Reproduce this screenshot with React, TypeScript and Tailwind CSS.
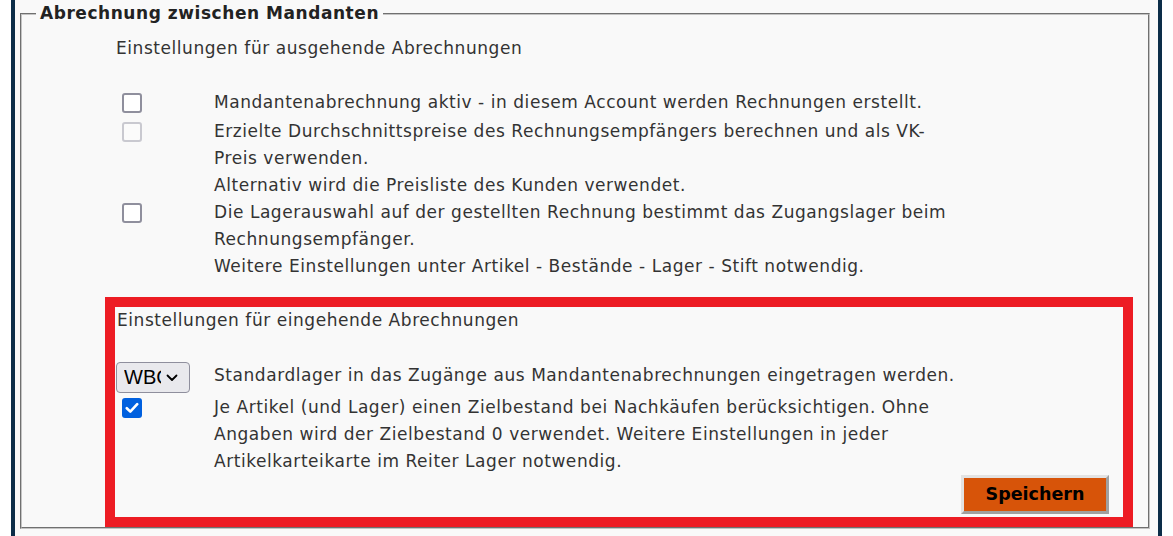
function Checkbox({ checked = false, disabled = false }: { checked?: boolean; disabled?: boolean }) {
  if (checked) {
    return (
      <span className="ml-[6px] mt-[4px] flex h-[20px] w-[20px] items-center justify-center rounded-[3px] bg-[#0060df]">
        <svg width="14" height="12" viewBox="0 0 14 12" fill="none">
          <path d="M1.8 6.2 L5.3 9.6 L12.2 2.2" stroke="white" strokeWidth="2.6" strokeLinecap="round" strokeLinejoin="round" />
        </svg>
      </span>
    );
  }
  return (
    <span
      className={
        disabled
          ? "ml-[6px] mt-[4px] block h-[20px] w-[20px] rounded-[3px] border-2 border-[#c9c9d0] bg-[#fbfbfb]"
          : "ml-[6px] mt-[4px] block h-[20px] w-[20px] rounded-[3px] border-2 border-[#8f8f9d] bg-white"
      }
    />
  );
}

export default function App() {
  return (
    <div className="h-[536px] w-full overflow-hidden bg-white px-[11px] font-['DejaVu_Sans',sans-serif] text-[17px] leading-[27px] tracking-[0.55px] text-[#333]">
      <div className="h-full border-x-4 border-[#0c2d48] bg-[#f9f9f9] pl-[5px] pr-[8px]">
        <fieldset className="border-2 border-[#c4c4c4] px-[14px] [border-style:groove]">
          <legend className="px-[4px] font-bold text-[#222]">Abrechnung zwischen Mandanten</legend>

          <div className="ml-[69px] mr-[1px]">
            {/* ausgehende */}
            <div className="pl-[11px]">
              <div className="mt-[8px]">Einstellungen für ausgehende Abrechnungen</div>

              <div className="mt-[27px] flex">
                <div className="w-[98px] shrink-0">
                  <Checkbox />
                </div>
                <div>Mandantenabrechnung aktiv - in diesem Account werden Rechnungen erstellt.</div>
              </div>

              <div className="mt-[2px] flex">
                <div className="w-[98px] shrink-0">
                  <Checkbox disabled />
                </div>
                <div>
                  Erzielte Durchschnittspreise des Rechnungsempfängers berechnen und als VK-
                  <br />
                  Preis verwenden.
                  <br />
                  Alternativ wird die Preisliste des Kunden verwendet.
                </div>
              </div>

              <div className="flex">
                <div className="w-[98px] shrink-0">
                  <Checkbox />
                </div>
                <div>
                  Die Lagerauswahl auf der gestellten Rechnung bestimmt das Zugangslager beim
                  <br />
                  Rechnungsempfänger.
                  <br />
                  Weitere Einstellungen unter Artikel - Bestände - Lager - Stift notwendig.
                </div>
              </div>
            </div>

            {/* eingehende */}
            <div className="mt-[17px] border-[10px] border-[#ed1c24] pb-[3px] pl-[1px] pr-[14px]">
              <div className="pl-[1px]">Einstellungen für eingehende Abrechnungen</div>

              <div className="mt-[28px] flex">
                <div className="w-[98px] shrink-0">
                  <div className="flex h-[31px] w-[74px] items-center rounded-[4px] border border-[#8f8f9d] bg-[#e9e9ed] pl-[7px] font-['Liberation_Sans',sans-serif] text-[20px] tracking-normal text-black">
                    <span className="block w-[37px] overflow-hidden whitespace-nowrap">WBC</span>
                    <svg className="ml-[5px]" width="12" height="8" viewBox="0 0 12 8" fill="none">
                      <path d="M1.5 1.5 L6 6 L10.5 1.5" stroke="black" strokeWidth="1.8" strokeLinecap="round" strokeLinejoin="round" />
                    </svg>
                  </div>
                </div>
                <div>Standardlager in das Zugänge aus Mandantenabrechnungen eingetragen werden.</div>
              </div>

              <div className="mt-[1px] flex">
                <div className="w-[98px] shrink-0">
                  <Checkbox checked />
                </div>
                <div>
                  Je Artikel (und Lager) einen Zielbestand bei Nachkäufen berücksichtigen. Ohne
                  <br />
                  Angaben wird der Zielbestand 0 verwendet. Weitere Einstellungen in jeder
                  <br />
                  Artikelkarteikarte im Reiter Lager notwendig.
                </div>
              </div>

              <div className="flex justify-end">
                <button className="h-[39px] w-[148px] border-[3px] border-b-[#a0a0a0] border-l-[#e3e3e3] border-r-[#a0a0a0] border-t-[#e3e3e3] bg-[#d75409] text-[17.5px] font-bold tracking-normal text-black">
                  Speichern
                </button>
              </div>
            </div>
          </div>
        </fieldset>
      </div>
    </div>
  );
}
